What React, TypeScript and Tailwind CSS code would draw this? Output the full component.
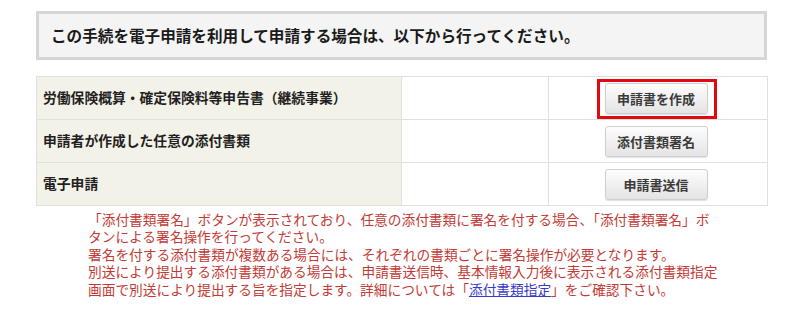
const rows = [
  { label: '労働保険概算・確定保険料等申告書（継続事業）', button: '申請書を作成', highlight: true },
  { label: '申請者が作成した任意の添付書類', button: '添付書類署名', highlight: false },
  { label: '電子申請', button: '申請書送信', highlight: false },
];

const ActionButton = ({ text }: { text: string }) => (
  <button className="w-[103px] h-[31px] rounded-[3px] border border-[#cfcfcf] bg-gradient-to-b from-[#fdfdfd] to-[#e4e4e4] shadow-[0_1px_1px_rgba(0,0,0,0.12)] text-[13px] font-bold text-[#3a3a3a] leading-none">
    {text}
  </button>
);

export default function App() {
  return (
    <div className="w-[800px] h-[331px] bg-white font-['Noto_Sans_CJK_JP','Noto_Sans',sans-serif] overflow-hidden">
      {/* 案内見出し */}
      <div className="ml-[36px] mt-[11px] w-[731px] h-[49px] border-[3px] border-[#d6d6d6] bg-[#f4f4f4] flex items-center pl-[12px]">
        <p className="text-[15.6px] font-bold text-[#1a1a1a] leading-none">
          この手続を電子申請を利用して申請する場合は、以下から行ってください。
        </p>
      </div>

      {/* 手続一覧 */}
      <table className="ml-[36px] mt-[16px] w-[731px] border-collapse table-fixed">
        <colgroup>
          <col className="w-[365px]" />
          <col className="w-[147px]" />
          <col className="w-[219px]" />
        </colgroup>
        <tbody>
          {rows.map((r) => (
            <tr key={r.label} className="h-[43px]">
              <td className="border border-[#e0e0dc] bg-[#f3f2e8] pl-[6px] text-[13.8px] font-bold text-[#1f1f1f] leading-none">
                {r.label}
              </td>
              <td className="border border-[#e0e0dc] bg-white" />
              <td className="border border-[#e0e0dc] bg-white">
                <div className="flex justify-center pr-[4px]">
                  <div className="relative">
                    <ActionButton text={r.button} />
                    {r.highlight && (
                      <div className="absolute -left-[8px] -right-[9px] -top-[4px] -bottom-[5px] border-[3px] border-[#e3080f] pointer-events-none" />
                    )}
                  </div>
                </div>
              </td>
            </tr>
          ))}
        </tbody>
      </table>

      {/* 注意書き */}
      <div className="ml-[88px] mt-[5px] text-[13.7px] leading-[17.4px] text-[#c23a34] whitespace-nowrap">
        <p>「添付書類署名」ボタンが表示されており、任意の添付書類に署名を付する場合、「添付書類署名」ボ</p>
        <p>タンによる署名操作を行ってください。</p>
        <p>署名を付する添付書類が複数ある場合には、それぞれの書類ごとに署名操作が必要となります。</p>
        <p>別送により提出する添付書類がある場合は、申請書送信時、基本情報入力後に表示される添付書類指定</p>
        <p>
          画面で別送により提出する旨を指定します。詳細については「
          <a href="#" className="text-[#3a3ac8] underline">添付書類指定</a>
          」をご確認下さい。
        </p>
      </div>
    </div>
  );
}
